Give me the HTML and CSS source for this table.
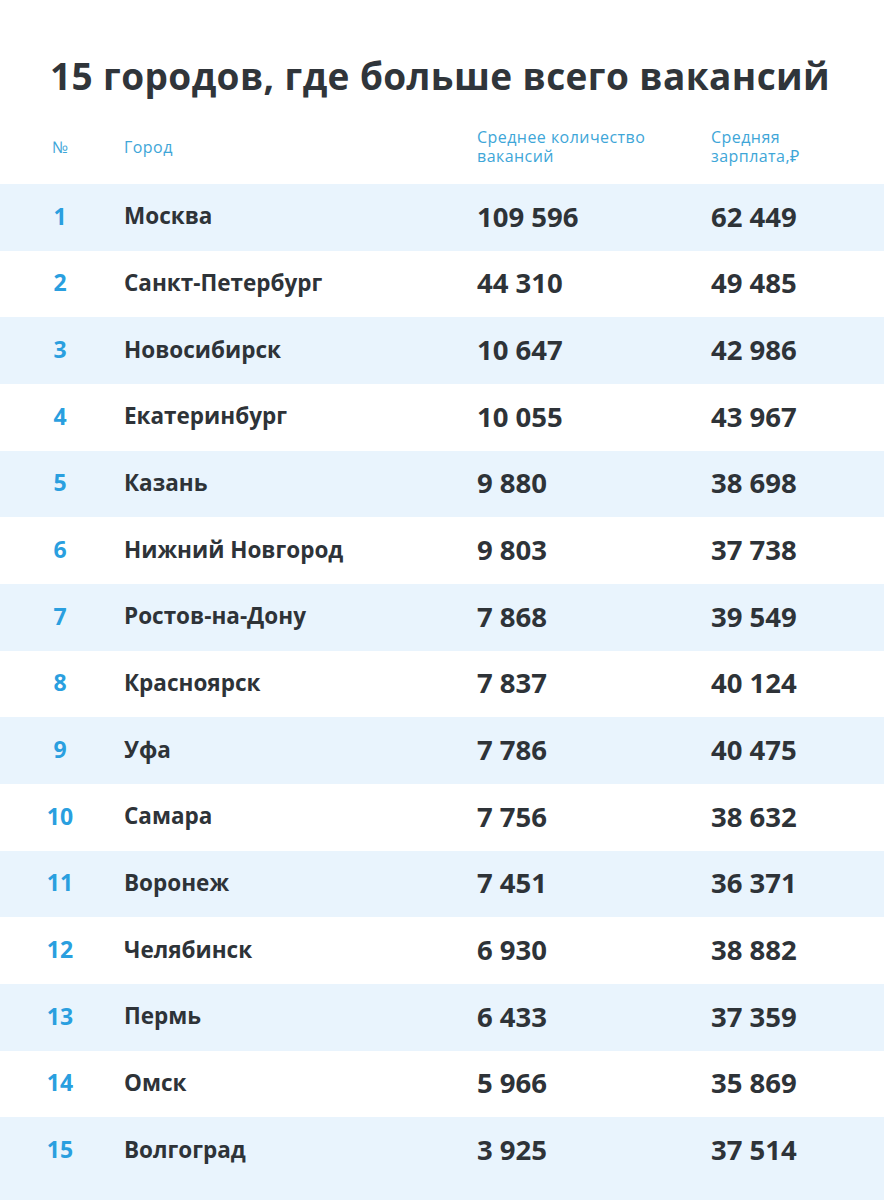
FILE: index.html
```html
<!DOCTYPE html>
<html lang="ru">
<head>
<meta charset="utf-8">
<title>15 городов, где больше всего вакансий</title>
<link rel="stylesheet" href="styles.css">
</head>
<body>
<main class="page">
  <h1 class="title">15 городов, где больше всего вакансий</h1>
  <div class="table">
    <div class="head">
      <div class="c-rank">№</div>
      <div class="c-city">Город</div>
      <div class="c-num">Среднее количество<br>вакансий</div>
      <div class="c-num">Средняя<br>зарплата,₽</div>
    </div>
    <div class="row"><div class="rank">1</div><div class="city">Москва</div><div class="num">109 596</div><div class="num">62 449</div></div>
    <div class="row"><div class="rank">2</div><div class="city">Санкт-Петербург</div><div class="num">44 310</div><div class="num">49 485</div></div>
    <div class="row"><div class="rank">3</div><div class="city">Новосибирск</div><div class="num">10 647</div><div class="num">42 986</div></div>
    <div class="row"><div class="rank">4</div><div class="city">Екатеринбург</div><div class="num">10 055</div><div class="num">43 967</div></div>
    <div class="row"><div class="rank">5</div><div class="city">Казань</div><div class="num">9 880</div><div class="num">38 698</div></div>
    <div class="row"><div class="rank">6</div><div class="city">Нижний Новгород</div><div class="num">9 803</div><div class="num">37 738</div></div>
    <div class="row"><div class="rank">7</div><div class="city">Ростов-на-Дону</div><div class="num">7 868</div><div class="num">39 549</div></div>
    <div class="row"><div class="rank">8</div><div class="city">Красноярск</div><div class="num">7 837</div><div class="num">40 124</div></div>
    <div class="row"><div class="rank">9</div><div class="city">Уфа</div><div class="num">7 786</div><div class="num">40 475</div></div>
    <div class="row"><div class="rank">10</div><div class="city">Самара</div><div class="num">7 756</div><div class="num">38 632</div></div>
    <div class="row"><div class="rank">11</div><div class="city">Воронеж</div><div class="num">7 451</div><div class="num">36 371</div></div>
    <div class="row"><div class="rank">12</div><div class="city">Челябинск</div><div class="num">6 930</div><div class="num">38 882</div></div>
    <div class="row"><div class="rank">13</div><div class="city">Пермь</div><div class="num">6 433</div><div class="num">37 359</div></div>
    <div class="row"><div class="rank">14</div><div class="city">Омск</div><div class="num">5 966</div><div class="num">35 869</div></div>
    <div class="row"><div class="rank">15</div><div class="city">Волгоград</div><div class="num">3 925</div><div class="num">37 514</div></div>
    <div class="tail"></div>
  </div>
</main>
</body>
</html>
```
FILE: styles.css
```css
html, body {
  margin: 0;
  padding: 0;
  background: #ffffff;
}
body {
  font-family: "Open Sans", "Noto Sans", "DejaVu Sans", sans-serif;
  color: #2e3338;
}
.page {
  width: 884px;
  height: 1200px;
  overflow: hidden;
}
.title {
  margin: 0;
  padding: 54px 0 0 50px;
  font-size: 37px;
  line-height: 44px;
  font-weight: 700;
  color: #30353a;
  letter-spacing: 0.4px;
  white-space: nowrap;
}
.head,
.row {
  display: grid;
  grid-template-columns: 60px 319px 200px 1fr;
  column-gap: 34px;
  padding-left: 30px;
  align-items: center;
}
.head {
  margin-top: 30px;
  height: 38px;
  margin-bottom: 18px;
  font-size: 16px;
  line-height: 19px;
  letter-spacing: 0.45px;
  color: #3ea6d8;
}
.c-rank {
  text-align: center;
  letter-spacing: 0;
}
.row {
  height: 66.67px;
}
.row:nth-child(even) {
  background: #e9f4fd;
}
.rank {
  text-align: center;
  font-size: 23px;
  font-weight: 700;
  color: #2a9fdf;
  padding-bottom: 3px;
}
.city {
  font-size: 22.5px;
  font-weight: 700;
  color: #2e3338;
  padding-bottom: 3px;
}
.num {
  font-size: 27.5px;
  font-weight: 700;
  color: #2e3338;
  padding-bottom: 2px;
}
.tail {
  height: 20px;
  background: #e9f4fd;
}
```
